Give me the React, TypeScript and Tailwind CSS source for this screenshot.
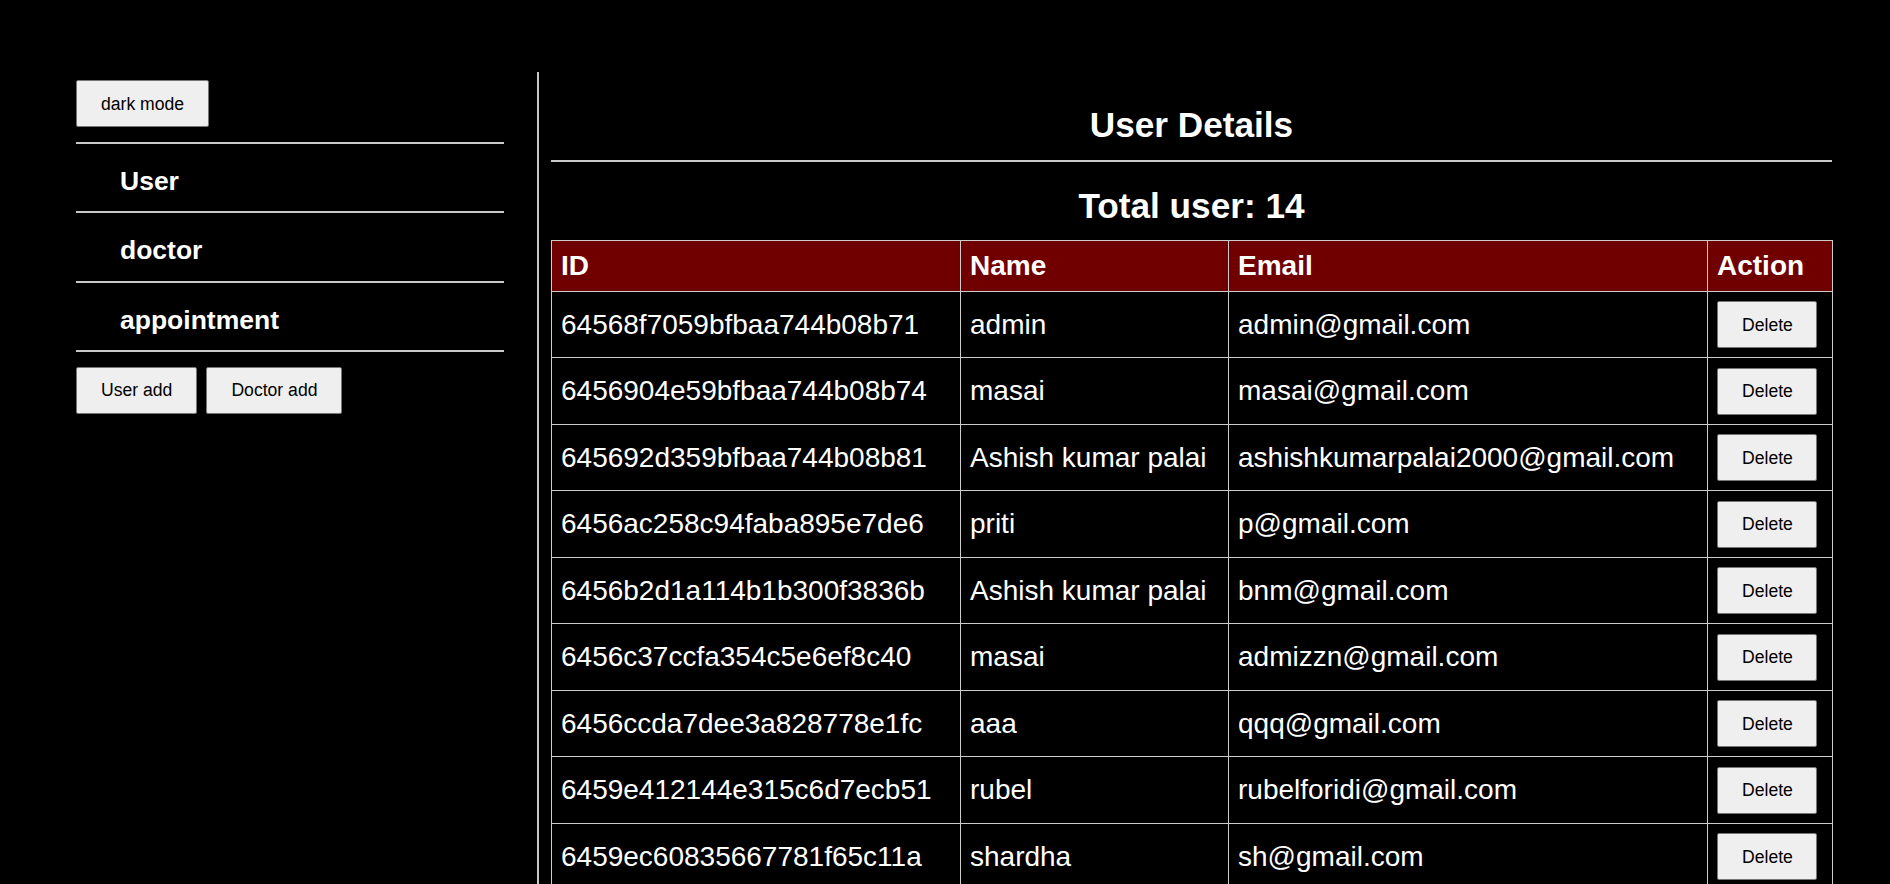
const users = [
  { id: "64568f7059bfbaa744b08b71", name: "admin", email: "admin@gmail.com" },
  { id: "6456904e59bfbaa744b08b74", name: "masai", email: "masai@gmail.com" },
  { id: "645692d359bfbaa744b08b81", name: "Ashish kumar palai", email: "ashishkumarpalai2000@gmail.com" },
  { id: "6456ac258c94faba895e7de6", name: "priti", email: "p@gmail.com" },
  { id: "6456b2d1a114b1b300f3836b", name: "Ashish kumar palai", email: "bnm@gmail.com" },
  { id: "6456c37ccfa354c5e6ef8c40", name: "masai", email: "admizzn@gmail.com" },
  { id: "6456ccda7dee3a828778e1fc", name: "aaa", email: "qqq@gmail.com" },
  { id: "6459e412144e315c6d7ecb51", name: "rubel", email: "rubelforidi@gmail.com" },
  { id: "6459ec60835667781f65c11a", name: "shardha", email: "sh@gmail.com" },
];

const btn =
  "bg-[#efefef] text-black border border-[#767676] rounded-[2px] px-[24px] py-[12.5px] text-[17.6px] leading-[20px]";

const App = () => {
  return (
    <div className="h-[884px] overflow-hidden bg-black text-white flex font-['Liberation_Sans',Arial,sans-serif]">
      <aside className="ml-[76px] mt-[80px] w-[428px] shrink-0">
        <button className={btn}>dark mode</button>
        <ul className="mt-[15px] border-t-2 border-[#c8c8c8]">
          {["User", "doctor", "appointment"].map((item) => (
            <li
              key={item}
              className="pl-[44px] pt-[21.7px] pb-[14.8px] leading-[31px] text-[26.5px] font-bold border-b-2 border-[#c8c8c8]"
            >
              {item}
            </li>
          ))}
        </ul>
        <div className="flex gap-[9px] mt-[14.5px]">
          <button className={btn}>User add</button>
          <button className={btn}>Doctor add</button>
        </div>
      </aside>

      <main className="ml-[33px] mt-[72px] border-l-2 border-[#c8c8c8] pl-[12px] w-[1295px] shrink-0">
        <h1 className="pt-[32.6px] text-center text-[35.2px] leading-[40.5px] font-bold">
          User Details
        </h1>
        <div className="mt-[15.2px] h-[2px] bg-[#c8c8c8]" />
        <h2 className="mt-[24px] text-center text-[35.2px] leading-[40.5px] font-bold">
          Total user: 14
        </h2>
        <table className="mt-[13.5px] w-[1281px] table-fixed border-collapse border border-[#cccccc] text-[28px]">
          <colgroup>
            <col className="w-[409px]" />
            <col className="w-[268px]" />
            <col className="w-[479px]" />
            <col className="w-[125px]" />
          </colgroup>
          <thead>
            <tr className="bg-[#700000]">
              <th className="border border-[#cccccc] text-left font-bold px-[9px] py-[8.8px] leading-[32px]">ID</th>
              <th className="border border-[#cccccc] text-left font-bold px-[9px] py-[8.8px] leading-[32px]">Name</th>
              <th className="border border-[#cccccc] text-left font-bold px-[9px] py-[8.8px] leading-[32px]">Email</th>
              <th className="border border-[#cccccc] text-left font-bold px-[9px] py-[8.8px] leading-[32px]">Action</th>
            </tr>
          </thead>
          <tbody>
            {users.map((u) => (
              <tr key={u.id}>
                <td className="border border-[#cccccc] px-[9px] py-[9.25px] leading-[32px] whitespace-nowrap">{u.id}</td>
                <td className="border border-[#cccccc] px-[9px] py-[9.25px] leading-[32px] whitespace-nowrap">{u.name}</td>
                <td className="border border-[#cccccc] px-[9px] py-[9.25px] leading-[32px] whitespace-nowrap">{u.email}</td>
                <td className="border border-[#cccccc] px-[9px] py-[9.25px] leading-[32px]">
                  <button className={btn + " w-[100px] px-0 block"}>Delete</button>
                </td>
              </tr>
            ))}
          </tbody>
        </table>
      </main>
    </div>
  );
};

export default App;
